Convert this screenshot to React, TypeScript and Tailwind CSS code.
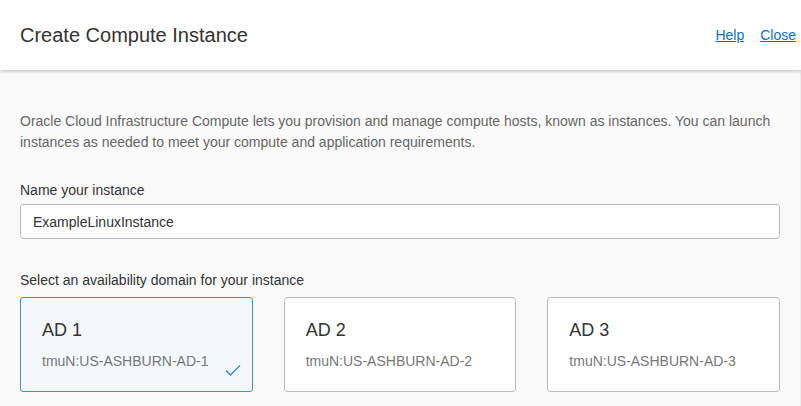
import { useState } from 'react';

const domains = [
  { name: 'AD 1', id: 'tmuN:US-ASHBURN-AD-1' },
  { name: 'AD 2', id: 'tmuN:US-ASHBURN-AD-2' },
  { name: 'AD 3', id: 'tmuN:US-ASHBURN-AD-3' },
];

export default function App() {
  const [name, setName] = useState('ExampleLinuxInstance');
  const [selected, setSelected] = useState(0);

  return (
    <div className="w-[801px] h-[406px] overflow-hidden bg-[#fafafa] font-['Liberation_Sans',Arial,sans-serif] text-[#333]">
      <header className="relative z-10 h-[70px] bg-white flex items-center justify-between pl-5 pr-[5px] shadow-[0_2px_3px_rgba(0,0,0,0.18)]">
        <h1 className="text-[20px] text-[#333] leading-none">Create Compute Instance</h1>
        <div className="flex gap-4 text-[14px] text-[#0572ce]">
          <a href="#" className="underline">Help</a>
          <a href="#" className="underline">Close</a>
        </div>
      </header>

      <main className="h-[336px] border-r border-[#eeeeee] px-5 pt-[41px]">
        <p className="text-[14px] leading-[21px] text-[#666]">
          Oracle Cloud Infrastructure Compute lets you provision and manage compute hosts, known as instances. You can launch instances as needed to meet your compute and application requirements.
        </p>

        <label className="block mt-[27px] text-[14px] leading-[20px] text-[#333]">Name your instance</label>
        <input
          className="block mt-[4px] w-full h-[35px] px-3 bg-white border border-[#b9bdc4] rounded-[3px] text-[14px] text-[#333] outline-none"
          value={name}
          onChange={e => setName(e.target.value)}
        />

        <div className="mt-[31px] text-[14px] leading-[20px] text-[#333]">Select an availability domain for your instance</div>
        <div className="mt-[7px] grid grid-cols-3 gap-[31px]">
          {domains.map((d, i) => (
            <div
              key={d.name}
              role="button"
              onClick={() => setSelected(i)}
              className={`relative h-[95px] cursor-pointer rounded-[3px] border pl-[21px] pt-[20px] ${selected === i ? 'border-[#3a8fe3] bg-[#f4f8fd]' : 'border-[#b9bdc4] bg-white'}`}
            >
              <div className="text-[18px] leading-[24px] text-[#333]">{d.name}</div>
              <div className="mt-[9px] text-[14px] leading-[20px] text-[#777]">{d.id}</div>
              {selected === i && (
                <svg className="absolute right-[11px] bottom-[14px]" width="16" height="13" viewBox="0 0 16 13" fill="none">
                  <path d="M1 6.5 L5.5 11 L15 1.5" stroke="#2f86de" strokeWidth="1.3" />
                </svg>
              )}
            </div>
          ))}
        </div>
      </main>
    </div>
  );
}
